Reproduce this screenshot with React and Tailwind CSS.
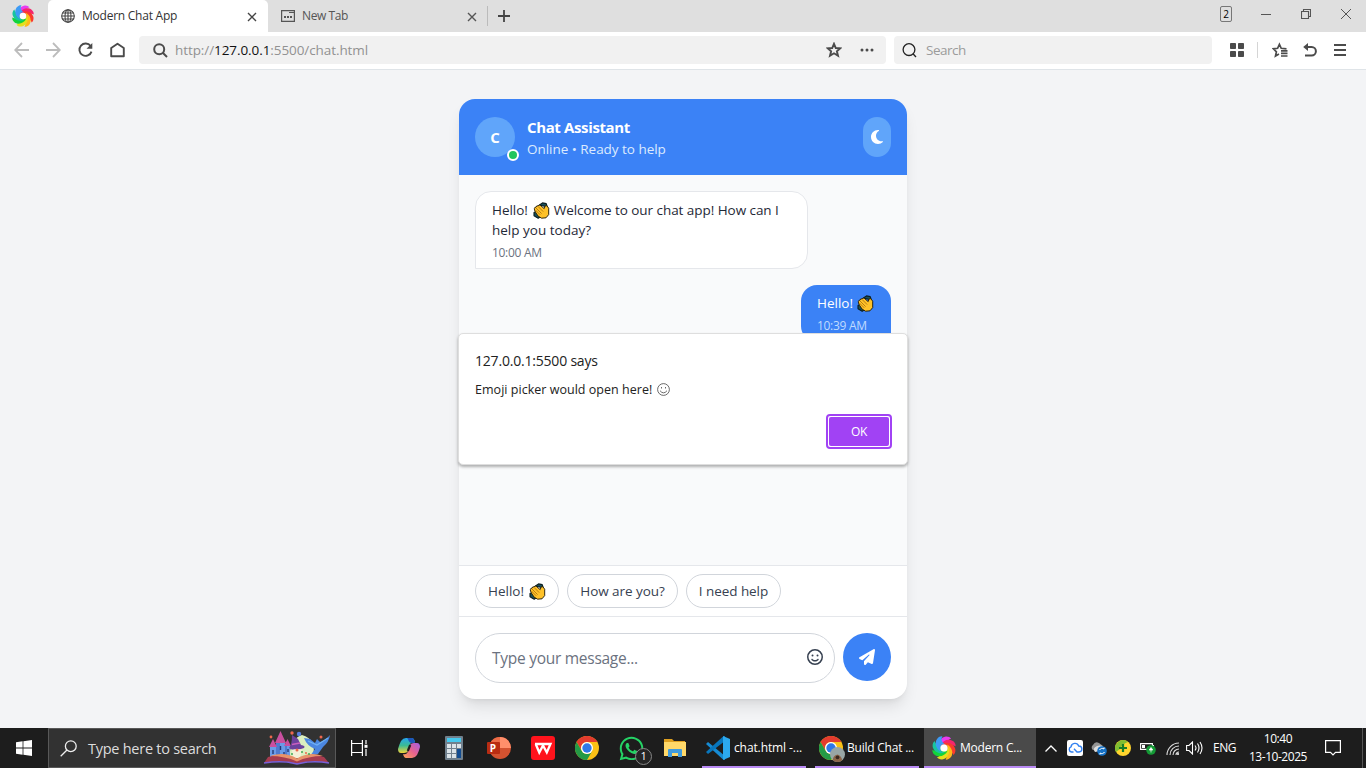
import React from "react";
import { FaMoon, FaPaperPlane, FaRegFaceSmile, FaWhatsapp } from "react-icons/fa6";

const swirlColors = ["#e83bf0", "#f4266d", "#fb3a2c", "#ffb81a", "#e4e01e", "#12d43a", "#18c4a0", "#3d9bf5"];

function Swirl({ className }) {
  return (
    <svg viewBox="0 0 24 24" className={className}>
      <circle cx="12" cy="12" r="8" fill="#7ed66a" />
      {swirlColors.map((c, i) => (
        <path key={c} d="M7.8 11.5C7.2 6 11.5 1.6 16.2 2.2C18.4 2.6 19.8 3.8 20.4 5.2C17.6 5 15.8 7.2 15.6 10.2C13.6 7.6 10 8 7.8 11.5Z" fill={c} transform={`rotate(${i * 45 - 14} 12 12)`} />
      ))}
      <circle cx="12" cy="12" r="3.3" fill="#fff" />
    </svg>
  );
}

function Clap({ className }) {
  return (
    <svg viewBox="0 0 17 17" className={className}>
      <path d="M6.5 3L9.5 .9L13.2 1.6L14.4 5ZM3.4 9.5L1 10.6V13.8L5.2 16.2L7.6 14.6Z" fill="#17505a" stroke="#0a1c20" strokeWidth="1.1" strokeLinejoin="round" />
      <path d="M1.4 6.4Q1.6 5 3 5.2Q3.4 3.4 5 3.8Q6 2.4 7.4 3.4L11.2 6.6L12 4.2Q13.2 2.8 14.2 4.2L15.7 6.2V12.6L13 15.8L8.6 16.2L5.2 14.2L2.6 10.4Q1 8 1.4 6.4Z" fill="#ffc229" stroke="#1c1605" strokeWidth=".9" strokeLinejoin="round" />
      <path d="M2.8 5.8L8.6 11.6M4.8 4.2L10.2 9.6M2.4 8L7.2 12.8" stroke="#a86c0a" strokeWidth=".8" />
    </svg>
  );
}

function Chrome({ className }) {
  return (
    <svg viewBox="0 0 24 24" className={className}>
      <circle cx="12" cy="12" r="12" fill="#fbc116" />
      <path d="M1.6 6A12 12 0 0 1 22.4 6H12A6 6 0 0 0 6.8 15Z" fill="#e33b2e" />
      <path d="M1.6 6A12 12 0 0 0 12 24L17.2 15A6 6 0 0 1 6.8 15Z" fill="#249a46" />
      <circle cx="12" cy="12" r="6" fill="#fff" />
      <circle cx="12" cy="12" r="4.7" fill="#2f78e8" />
    </svg>
  );
}

function Close({ className }) {
  return (
    <svg viewBox="0 0 10 10" className={className}>
      <path d="M1 1L9 9M9 1L1 9" fill="none" stroke="currentColor" strokeWidth="1.4" />
    </svg>
  );
}

function TabStrip() {
  return (
    <div className="flex h-8 bg-[#dfdfdf] text-[12px] text-[#333]">
      <div className="flex w-12 items-center justify-center rounded-br">
        <Swirl className="mr-0.5 size-[24px]" />
      </div>
      <div className="flex w-[220px] items-center rounded-t-[5px] bg-white pl-[13px] pr-[11px]">
        <svg viewBox="0 0 14 14" className="size-[14px]" fill="none" stroke="#444" strokeWidth="1.1">
          <circle cx="7" cy="7" r="6.3" />
          <ellipse cx="7" cy="7" rx="3" ry="6.3" />
          <path d="M7 .7V13.3M.7 7H13.3M1.5 4H12.5M1.5 10H12.5" />
        </svg>
        <span className="ml-[7px] grow tracking-[-0.24px]">Modern Chat App</span>
        <Close className="mt-0.5 size-[10px] text-[#444]" />
      </div>
      <div className="flex w-[219px] items-center pl-[13px] pr-[10px]">
        <svg viewBox="0 0 14 12" className="h-3 w-[14px]" fill="none" stroke="#555" strokeWidth="1.2">
          <path d="M.6 .6H13.4V11.4H.6ZM8 2.5H13" />
          <path d="M3 7H5M6 7H8M9 7H11" strokeWidth="1.8" />
        </svg>
        <span className="ml-[7px] grow tracking-[-0.4px] text-[#555]">New Tab</span>
        <Close className="mt-0.5 size-[10px] text-[#555]" />
      </div>
      <div className="flex items-center">
        <div className="h-5 w-px bg-[#bbb]" />
        <svg viewBox="0 0 12 12" className="ml-[10px] size-3" stroke="#444" strokeWidth="1.8">
          <path d="M6 0V12M0 6H12" />
        </svg>
      </div>
      <div className="ml-auto flex items-center pb-1 pr-[15px] text-[#555]">
        <div className="flex h-4 w-3 items-center justify-center rounded-xs border border-[#777] pt-px text-[10px] font-medium text-black">2</div>
        <svg viewBox="0 0 10 10" className="ml-[29px] mt-0.5 size-[10px]" stroke="currentColor"><path d="M0 4.5H10" /></svg>
        <svg viewBox="0 0 10 10" className="ml-[30px] size-[10px]" fill="none" stroke="currentColor" strokeWidth="1.1">
          <path d="M.5 2.5H7.5V9.5H.5ZM2.5 2.5V.5H9.5V7.5H7.5" />
        </svg>
        <svg viewBox="0 0 10 10" className="ml-[30px] size-[10px]" stroke="currentColor"><path d="M0 0L10 10M10 0L0 10" /></svg>
      </div>
    </div>
  );
}

function Toolbar() {
  return (
    <div className="flex h-[38px] items-center border-b border-[#dfe4e8] bg-white px-[14px] pb-px text-[14px]">
      <div className="flex w-[125px] items-center gap-[17px] text-[#4b4b4b]">
        <svg viewBox="0 0 15 16" className="h-4 w-[15px]" fill="none" stroke="#bcbcbc" strokeWidth="1.8"><path d="M15 8H1.5M8 1L1.2 8L8 15" /></svg>
        <svg viewBox="0 0 15 16" className="h-4 w-[15px]" fill="none" stroke="#bcbcbc" strokeWidth="1.8"><path d="M0 8H13.5M7 1L13.8 8L7 15" /></svg>
        <svg viewBox="0 0 15 16" className="h-4 w-[15px]" fill="none" stroke="currentColor" strokeWidth="1.9">
          <path d="M12.6 4A6.2 6.2 0 1 0 13.5 9.6" /><path d="M14.3 1V6.8H8.5Z" fill="currentColor" stroke="none" />
        </svg>
        <svg viewBox="0 0 15 16" className="h-4 w-[15px]" fill="none" stroke="currentColor" strokeWidth="1.9" strokeLinejoin="round">
          <path d="M1.2 14.2V6L7.5 1.8L13.8 6V14.2Z" />
        </svg>
      </div>
      <div className="flex h-7 w-[747px] items-center rounded bg-[#f1f1f1] pl-[14px] pr-3">
        <svg viewBox="0 0 15 15" className="size-[15px]" fill="none" stroke="#4b4b4b" strokeWidth="2"><circle cx="6.2" cy="6.2" r="5" /><path d="M10 10L14 14" /></svg>
        <span className="ml-[7px] grow text-[13.5px] tracking-[-0.08px] text-[#929292]">http://<span className="text-[#111]">127.0.0.1</span>:5500/chat.html</span>
        <svg viewBox="0 0 16 16" className="size-4" fill="none" stroke="#4b4b4b" strokeWidth="1.9"><path d="M8 1.8L9.8 6L14.3 6.3L10.9 9.3L12 13.8L8 11.3L4 13.8L5.1 9.3L1.7 6.3L6.2 6Z" /></svg>
        <svg viewBox="0 0 14 4" className="ml-[18px] h-1 w-[14px]" fill="#4b4b4b"><circle cx="2" cy="2" r="1.5" /><circle cx="7" cy="2" r="1.5" /><circle cx="12" cy="2" r="1.5" /></svg>
      </div>
      <div className="ml-2 flex h-7 w-[318px] items-center rounded bg-[#f1f1f1] pl-2">
        <svg viewBox="0 0 15 15" className="size-[15px]" fill="none" stroke="#222" strokeWidth="1.3"><circle cx="7" cy="6.6" r="5.9" /><path d="M11.2 11L14 14" /></svg>
        <span className="ml-[9px] text-[13.5px] tracking-[-0.5px] text-[#9b9b9b]">Search</span>
      </div>
      <div className="ml-[18px] flex items-center text-[#4b4b4b]">
        <svg viewBox="0 0 14 14" className="size-[14px]" fill="currentColor">
          <rect width="6" height="6" rx=".8" /><rect x="8" width="6" height="6" rx=".8" /><rect y="8" width="6" height="6" rx=".8" /><rect x="8" y="8" width="6" height="6" rx=".8" />
        </svg>
        <div className="ml-[13px] h-4 w-px bg-[#d5d5d5]" />
        <svg viewBox="0 0 16 16" className="ml-[14px] size-4" fill="none" stroke="currentColor" strokeWidth="1.7">
          <path d="M7 12.1L3.5 14L4.4 9.8L1.4 6.8L5.6 6.3L7.4 2.3L9.2 6.3L14.5 6.8M9 8.8H15.5M9 11.4H15.5M9 14H15.5" />
        </svg>
        <svg viewBox="0 0 14 14" className="ml-[15px] size-[14px]" fill="none" stroke="currentColor" strokeWidth="2">
          <path d="M3 4H8.6A4.2 4.2 0 0 1 8.6 12.6H2" /><path d="M5 0V8L.2 4Z" fill="currentColor" stroke="none" />
        </svg>
        <svg viewBox="0 0 12 12" className="ml-[17px] size-3" stroke="currentColor" strokeWidth="2"><path d="M0 1H12M0 6H12M0 11H12" /></svg>
      </div>
    </div>
  );
}

function ChatCard() {
  return (
    <div className="flex h-[600px] w-[448px] flex-col overflow-hidden rounded-2xl bg-white shadow-lg">
      <div className="flex h-[76px] shrink-0 items-center bg-[#3b82f6] px-4 text-white">
        <div className="relative flex size-10 items-center justify-center rounded-full bg-[#60a5fa] pt-px text-[15px] font-bold">
          C
          <div className="absolute -bottom-1 -right-1 box-content size-[8px] rounded-full border-2 border-white bg-[#22c55e]" />
        </div>
        <div className="ml-3 grow">
          <div className="text-[15px] font-bold leading-6 tracking-[-0.37px]">Chat Assistant</div>
          <div className="text-[13.5px] leading-5 tracking-[-0.03px] text-[#dbeafe]">Online • Ready to help</div>
        </div>
        <button className="flex h-10 w-7 items-center justify-center rounded-full bg-[#60a5fa]"><FaMoon className="h-4 w-3" /></button>
      </div>
      <div className="flex grow flex-col gap-4 bg-[#f9fafb] p-4">
        <div className="h-[78px] w-[333px] self-start rounded-2xl rounded-bl-none border border-[#e5e7eb] bg-white px-4 py-2 text-[#1f2937]">
          <div className="whitespace-nowrap text-[13.5px] leading-5">
            <div className="flex h-5 items-center tracking-[-0.05px]">Hello!<Clap className="mx-1 ml-[5px] size-[17px]" />Welcome to our chat app! How can I</div>
            <div>help you today?</div>
          </div>
          <div className="mt-[5px] text-[12px] leading-4 tracking-[-0.3px] text-[#6b7280]">10:00 AM</div>
        </div>
        <div className="w-[90px] self-end rounded-2xl rounded-br-none bg-[#3b82f6] px-4 py-2 text-white">
          <div className="flex h-5 items-center whitespace-nowrap text-[13.5px] leading-5">Hello!<Clap className="ml-1 size-[17px] shrink-0" /></div>
          <div className="mt-[5px] text-[12px] leading-4 tracking-[-0.3px] text-[#bfdbfe]">10:39 AM</div>
        </div>
      </div>
      <div className="flex h-[51px] shrink-0 items-center gap-2 border-t border-[#e5e7eb] px-4 text-[13.5px] text-[#374151]">
        <button className="flex h-[34px] w-[84px] items-center justify-center gap-[5px] whitespace-nowrap rounded-full border border-[#d1d5db]">Hello! <Clap className="size-[17px]" /></button>
        <button className="h-[34px] w-[111px] whitespace-nowrap rounded-full border border-[#d1d5db] tracking-[-0.06px]">How are you?</button>
        <button className="h-[34px] w-[95px] whitespace-nowrap rounded-full border border-[#d1d5db] tracking-[-0.06px]">I need help</button>
      </div>
      <div className="flex h-[83px] shrink-0 gap-2 border-t border-[#e5e7eb] p-4">
        <div className="flex h-[50px] w-[360px] items-center rounded-full border border-[#d1d5db] pl-4 pr-[11px]">
          <span className="grow pt-0.5 text-[15.5px] tracking-[-0.27px] text-[#6b7280]">Type your message...</span>
          <FaRegFaceSmile className="mb-0.5 size-4 text-[#374151]" />
        </div>
        <button className="flex size-12 items-center justify-center rounded-full bg-[#3b82f6] text-white"><FaPaperPlane className="size-4" /></button>
      </div>
    </div>
  );
}

function Dialog() {
  return (
    <div className="absolute left-[458px] top-[333px] flex h-[132px] w-[450px] flex-col rounded-[5px] border border-[#dedede] bg-white px-4 pt-[15px] text-[#222] shadow-[0_2px_3px_rgba(0,0,0,0.3)]">
      <div className="text-[14px] leading-6 tracking-[-0.2px]">127.0.0.1:5500 says</div>
      <div className="mt-[5px] flex h-6 items-center text-[12.5px] leading-6 tracking-[0.03px]">
        Emoji picker would open here!
        <svg viewBox="0 0 13 13" className="-mt-0.5 ml-[5px] size-[13px]" fill="none" stroke="#444" strokeWidth=".8">
          <circle cx="6.5" cy="6.5" r="5.9" /><path d="M3 7.7Q6.5 12 10 7.7M4.5 4V5.5M8.5 4V5.5" />
        </svg>
      </div>
      <button className="-mr-px mt-3 h-[35px] w-[66px] self-end rounded-[4px] border-2 border-[#a142f4] bg-white p-px">
        <span className="flex h-full items-center justify-center rounded-xs bg-[#a142f4] text-[12px] font-medium tracking-[-0.3px] text-white">OK</span>
      </button>
    </div>
  );
}

function StoryBook() {
  return (
    <svg viewBox="0 0 68 36" className="h-9 w-[68px]">
      <path d="M26 27Q28 8 39 5Q54 9 50 27Z" fill="#dcefc0" />
      <path d="M7 16H13V12H22V15H27V28H7Z" fill="#6a9be8" />
      <path d="M13 12H17V28H13ZM22 15H24V28H22Z" fill="#4e7ad0" />
      <path d="M6 17L10 9L14 17ZM12 13L17.5 1L23 13ZM21 16L24.5 9L28 16Z" fill="#c94f9f" />
      <path d="M10 20V24M17.5 16V20M21 22V27M25 19V22" stroke="#243977" strokeWidth="1.4" />
      <path d="M26 18Q29 15 29 5L35 9L38 15Q43 16 41 18Q31 22 26 18Z" fill="#6b419d" />
      <path d="M29 14.5L37 13" stroke="#c95fbe" strokeWidth="1.6" />
      <path d="M29 20Q34 18 39 20L37 28H30Z" fill="#f5f0d8" />
      <path d="M41 8L47 9L52 13L54 9L57 12Q62 11 67 5Q66 12 60 17L55 24L47 26L52 19Q44 16 41 8Z" fill="#4b86e0" />
      <path d="M45 11L54 15L65 8" fill="none" stroke="#6fb1f4" strokeWidth="1.2" />
      <path d="M5 27Q20 22 34 29Q48 22 61 27L66 33Q48 29 34 34Q20 29 1 33Z" fill="#a63b4f" />
      <path d="M7 26Q22 21 34 28.5Q46 21 60 26Q45 26 34 31.5Q22 26 7 26Z" fill="#e8926a" />
      <path d="M1 33Q20 30 34 34Q49 30 66 33" fill="none" stroke="#7960d8" strokeWidth="1.6" />
      <g fill="#ee674e"><circle cx="8" cy="7" r="1.4" /><circle cx="29" cy="3" r="1.7" /><circle cx="58" cy="7" r="1.5" /><circle cx="43" cy="23" r="1" /><circle cx="34" cy="20" r="1.5" /></g>
      <g fill="#43a85a"><circle cx="29" cy="24" r="1" /><circle cx="39" cy="22" r="1" /><circle cx="46" cy="24" r="1" /></g>
      <circle cx="36" cy="4" r="2.2" fill="#557ee0" />
    </svg>
  );
}

function Slot({ children }) {
  return <div className="flex w-[44.3px] items-center justify-center">{children}</div>;
}

function Taskbar() {
  return (
    <div className="flex h-10 bg-[#1d1d1d] text-white">
      <div className="flex w-12 items-center justify-center">
        <svg viewBox="0 0 16 16" className="size-4" fill="#fff"><path d="M0 2.2L6.6 1.3V7.6H0ZM7.4 1.2L16 0V7.6H7.4ZM0 8.4H6.6V14.7L0 13.8ZM7.4 8.4H16V16L7.4 14.8Z" /></svg>
      </div>
      <div className="flex w-72 items-center border border-[#585858] bg-[#323232] pl-[11px] pr-1">
        <svg viewBox="0 0 17 17" className="size-[17px]" fill="none" stroke="#eee" strokeWidth="1.3"><circle cx="10.8" cy="6.2" r="5.4" /><path d="M7 10L.7 16.3" /></svg>
        <span className="ml-[11px] grow whitespace-nowrap pt-0.5 text-[14.5px] tracking-[-0.26px] text-[#ddd]">Type here to search</span>
        <StoryBook />
      </div>
      <div className="flex w-[51px] items-center pl-[15px]">
        <svg viewBox="0 0 17 16" className="h-4 w-[17px]" fill="none" stroke="#fff" strokeWidth="1.2">
          <path d="M.6 0V3.5H11.4V0M.6 16V12.5H11.4V16M.6 3.5V12.5M11.4 3.5V12.5M15 0V4M15 9V16" /><path d="M13.5 4.8H16.5V7.8H13.5Z" fill="#fff" stroke="none" />
        </svg>
      </div>
      <Slot>
        <svg viewBox="0 0 22 20" className="h-5 w-[22px]">
          <defs>
            <linearGradient id="cpa" x1="0" y1="0" x2="0" y2="1"><stop stopColor="#25a6ef" /><stop offset=".5" stopColor="#3bbb93" /><stop offset="1" stopColor="#f1d43a" /></linearGradient>
            <linearGradient id="cpb" x1="1" y1="0" x2="0" y2="1"><stop stopColor="#a45fe5" /><stop offset=".5" stopColor="#e8628f" /><stop offset="1" stopColor="#fda755" /></linearGradient>
          </defs>
          <path d="M8 0H14Q16 0 17 4Q13 3 12 7L10 13Q9 15 6 15H3Q0 15 0 11Q1 7 3 3Q5 0 8 0Z" fill="url(#cpa)" />
          <path d="M9 0H14Q16 0 17 5H14Q11 5 10 1Z" fill="#1d56b9" />
          <path d="M14 20H8Q6 20 5 16Q9 17 10 13L12 7Q13 5 16 5H19Q22 5 22 9Q21 13 19 17Q17 20 14 20Z" fill="url(#cpb)" />
          <path d="M12.2 7L9.8 13" stroke="#1d1d1d" strokeWidth="2.2" />
        </svg>
      </Slot>
      <Slot>
        <svg viewBox="0 0 18 24" className="ml-px h-6 w-[18px]">
          <rect width="18" height="24" rx="1" fill="#70808d" /><rect x="2" y="2" width="14" height="4" fill="#46c9ee" />
          <g fill="#dbe3e8"><rect x="2" y="8" width="4" height="4" /><rect x="7" y="8" width="4" height="4" /><rect x="12" y="8" width="4" height="4" /><rect x="2" y="13" width="4" height="4" /><rect x="7" y="13" width="4" height="4" /><rect x="2" y="18" width="4" height="4" /><rect x="7" y="18" width="4" height="4" /></g>
          <rect x="12" y="13" width="4" height="9" fill="#124c90" />
        </svg>
      </Slot>
      <Slot>
        <div className="relative ml-0.5 h-[22px] w-6">
          <svg viewBox="0 0 24 22" className="h-[22px] w-6">
            <circle cx="13" cy="11" r="11" fill="#d35230" /><path d="M13 0A11 11 0 0 0 2 11H13Z" fill="#ed6c47" /><path d="M13 0A11 11 0 0 1 24 11H13Z" fill="#ff8f6b" /><rect y="5" width="13" height="12" rx="1" fill="#b92c12" />
          </svg>
          <span className="absolute left-[3px] top-[5px] text-[10px] font-bold leading-3">P</span>
        </div>
      </Slot>
      <Slot>
        <svg viewBox="0 0 24 24" className="ml-0.5 size-6"><rect width="24" height="24" rx="3" fill="#ff131c" /><path d="M4 8H19.5L15.8 16.5L12 9.5L8.3 16.5L4.7 8" fill="none" stroke="#fff" strokeWidth="2.3" /></svg>
      </Slot>
      <Slot><Chrome className="ml-0.5 size-6" /></Slot>
      <Slot>
        <div className="relative ml-0.5">
          <FaWhatsapp className="size-[27px] text-[#25d366]" />
          <div className="absolute -bottom-[3px] -right-[7px] flex size-[17px] items-center justify-center rounded-full border border-[#888] bg-[#252525] text-[11px]">1</div>
        </div>
      </Slot>
      <Slot>
        <svg viewBox="0 0 22 18" className="h-[18px] w-[22px]"><path d="M0 0H8L10 2H21V5H0Z" fill="#dfa020" /><path d="M0 3H22V17H0Z" fill="#ffd869" /><path d="M4 18V11Q4 10 5 10H17Q18 10 18 11V18H14V14H8V18Z" fill="#409bdc" /></svg>
      </Slot>
      <div className="ml-[4.9px] flex w-[104px] items-center border-b-2 border-[#b98af4] pl-1 pt-0.5">
        <svg viewBox="0 0 24 24" className="size-6 shrink-0"><path d="M0 8L2 6L19 20V24L16.5 23Z" fill="#168bd4" /><path d="M0 16L2 18L19 5V0L16.5 1Z" fill="#0876bd" /><path d="M17 0L24 3V21L17 24Z" fill="#2ca9ef" /></svg>
        <span className="ml-1 whitespace-nowrap text-[12px] tracking-[-0.1px]">chat.html -...</span>
      </div>
      <div className="ml-[9px] flex w-[104px] items-center border-b-2 border-[#b98af4] pl-1 pt-0.5">
        <div className="relative shrink-0">
          <Chrome className="size-6" />
          <svg viewBox="0 0 16 16" className="absolute -bottom-0.5 -right-0.5 size-[15px]"><circle cx="8" cy="8" r="8" fill="#98a6a5" /><path d="M3 14Q3 9 8 8Q12 9 13 14Q8 18 3 14" fill="#8b6549" /><circle cx="8" cy="11" r="2" fill="#3a2920" /></svg>
        </div>
        <span className="ml-1 whitespace-nowrap text-[12px] tracking-[-0.22px]">Build Chat ...</span>
      </div>
      <div className="ml-[5px] flex w-28 items-center border-b-2 border-[#b98af4] bg-[#4a4a4a] pl-[7px] pt-0.5">
        <Swirl className="size-[26px] shrink-0" />
        <span className="ml-[3px] whitespace-nowrap text-[12px] tracking-[-0.22px]">Modern C...</span>
      </div>
      <div className="flex grow items-center pl-[9px]">
        <svg viewBox="0 0 12 7" className="h-[7px] w-3" fill="none" stroke="#fff" strokeWidth="1.3"><path d="M.5 6.5L6 1L11.5 6.5" /></svg>
        <svg viewBox="0 0 16 16" className="ml-[10px] size-4"><rect width="16" height="16" rx="2" fill="#fff" /><path d="M6.5 12H4.5A2.7 2.7 0 0 1 4 6.8A4 4 0 0 1 11.7 6A3 3 0 0 1 12 12H10L7 8.8" fill="none" stroke="#3180f1" strokeWidth="1.4" /></svg>
        <svg viewBox="0 0 17 15" className="ml-[7px] h-[15px] w-[17px]"><path d="M3 9A3 3 0 0 1 3 4Q5 0 9 2L13 5L10 10Z" fill="#949494" /><path d="M5 11Q2 7 7 5Q13 3 15 9Z" fill="#ddd" /><circle cx="12" cy="10" r="4.8" fill="#1672c6" /><path d="M9.5 9A3 3 0 0 1 14 8V6.5M14.5 11A3 3 0 0 1 10 12V13.5" fill="none" stroke="#fff" /></svg>
        <svg viewBox="0 0 16 16" className="ml-2 size-4"><circle cx="8" cy="8" r="8" fill="#ffd52d" /><path d="M1 12A8 8 0 0 1 13 2Q7 4 5 9Z" fill="#80bd31" /><path d="M8 4V12M4 8H12" stroke="#167d27" strokeWidth="2.2" /></svg>
        <svg viewBox="0 0 16 14" className="ml-[9px] h-[14px] w-4"><path d="M.6 2.6H12.4V8.4H.6Z" fill="none" stroke="#fff" strokeWidth="1.1" /><path d="M2 4H5V7H2ZM13 4H14V7H13Z" fill="#fff" /><circle cx="11" cy="9" r="4.8" fill="#149a35" /><path d="M11 11.5V8M9.2 9L11 6.5L12.8 9Z" fill="#fff" stroke="#fff" strokeWidth=".7" /></svg>
        <svg viewBox="0 0 13 13" className="ml-[10px] size-[13px]" fill="none" stroke="#ddd" strokeWidth="1.1"><path d="M1 13A12 12 0 0 1 13 1M4 13A9 9 0 0 1 13 4M7 13A6 6 0 0 1 13 7M10 13A3 3 0 0 1 13 10" /><circle cx="12" cy="12" r="1" fill="#fff" stroke="none" /></svg>
        <svg viewBox="0 0 17 14" className="ml-[7px] h-[14px] w-[17px]" fill="none" stroke="#fff" strokeWidth="1.1"><path d="M.6 4.5H3L6.5 1V13L3 9.5H.6ZM9 4.5Q11 7 9 9.5M11.5 2.5Q14.5 7 11.5 11.5M14 1Q18 7 14 13" /></svg>
        <span className="ml-[10px] w-6 text-[12px] tracking-[-0.5px]">ENG</span>
        <div className="ml-2 w-[66px] whitespace-nowrap text-center text-[12px] leading-[18px] tracking-[-0.45px]">10:40<br />13-10-2025</div>
        <svg viewBox="0 0 16 16" className="ml-[14px] size-4" fill="none" stroke="#fff" strokeWidth="1.2"><path d="M.6.6H15.4V12.4H10.5L8 15L5.5 12.4H.6Z" /></svg>
        <div className="ml-auto mr-[3px] h-full w-px bg-[#555]" />
      </div>
    </div>
  );
}

export default function App() {
  return (
    <div className="relative flex h-[768px] w-[1366px] flex-col overflow-hidden font-['Open_Sans','Noto_Sans',sans-serif]">
      <TabStrip />
      <Toolbar />
      <main className="flex h-[658px] items-center justify-center bg-[#f3f4f6]">
        <ChatCard />
      </main>
      <Dialog />
      <Taskbar />
    </div>
  );
}
